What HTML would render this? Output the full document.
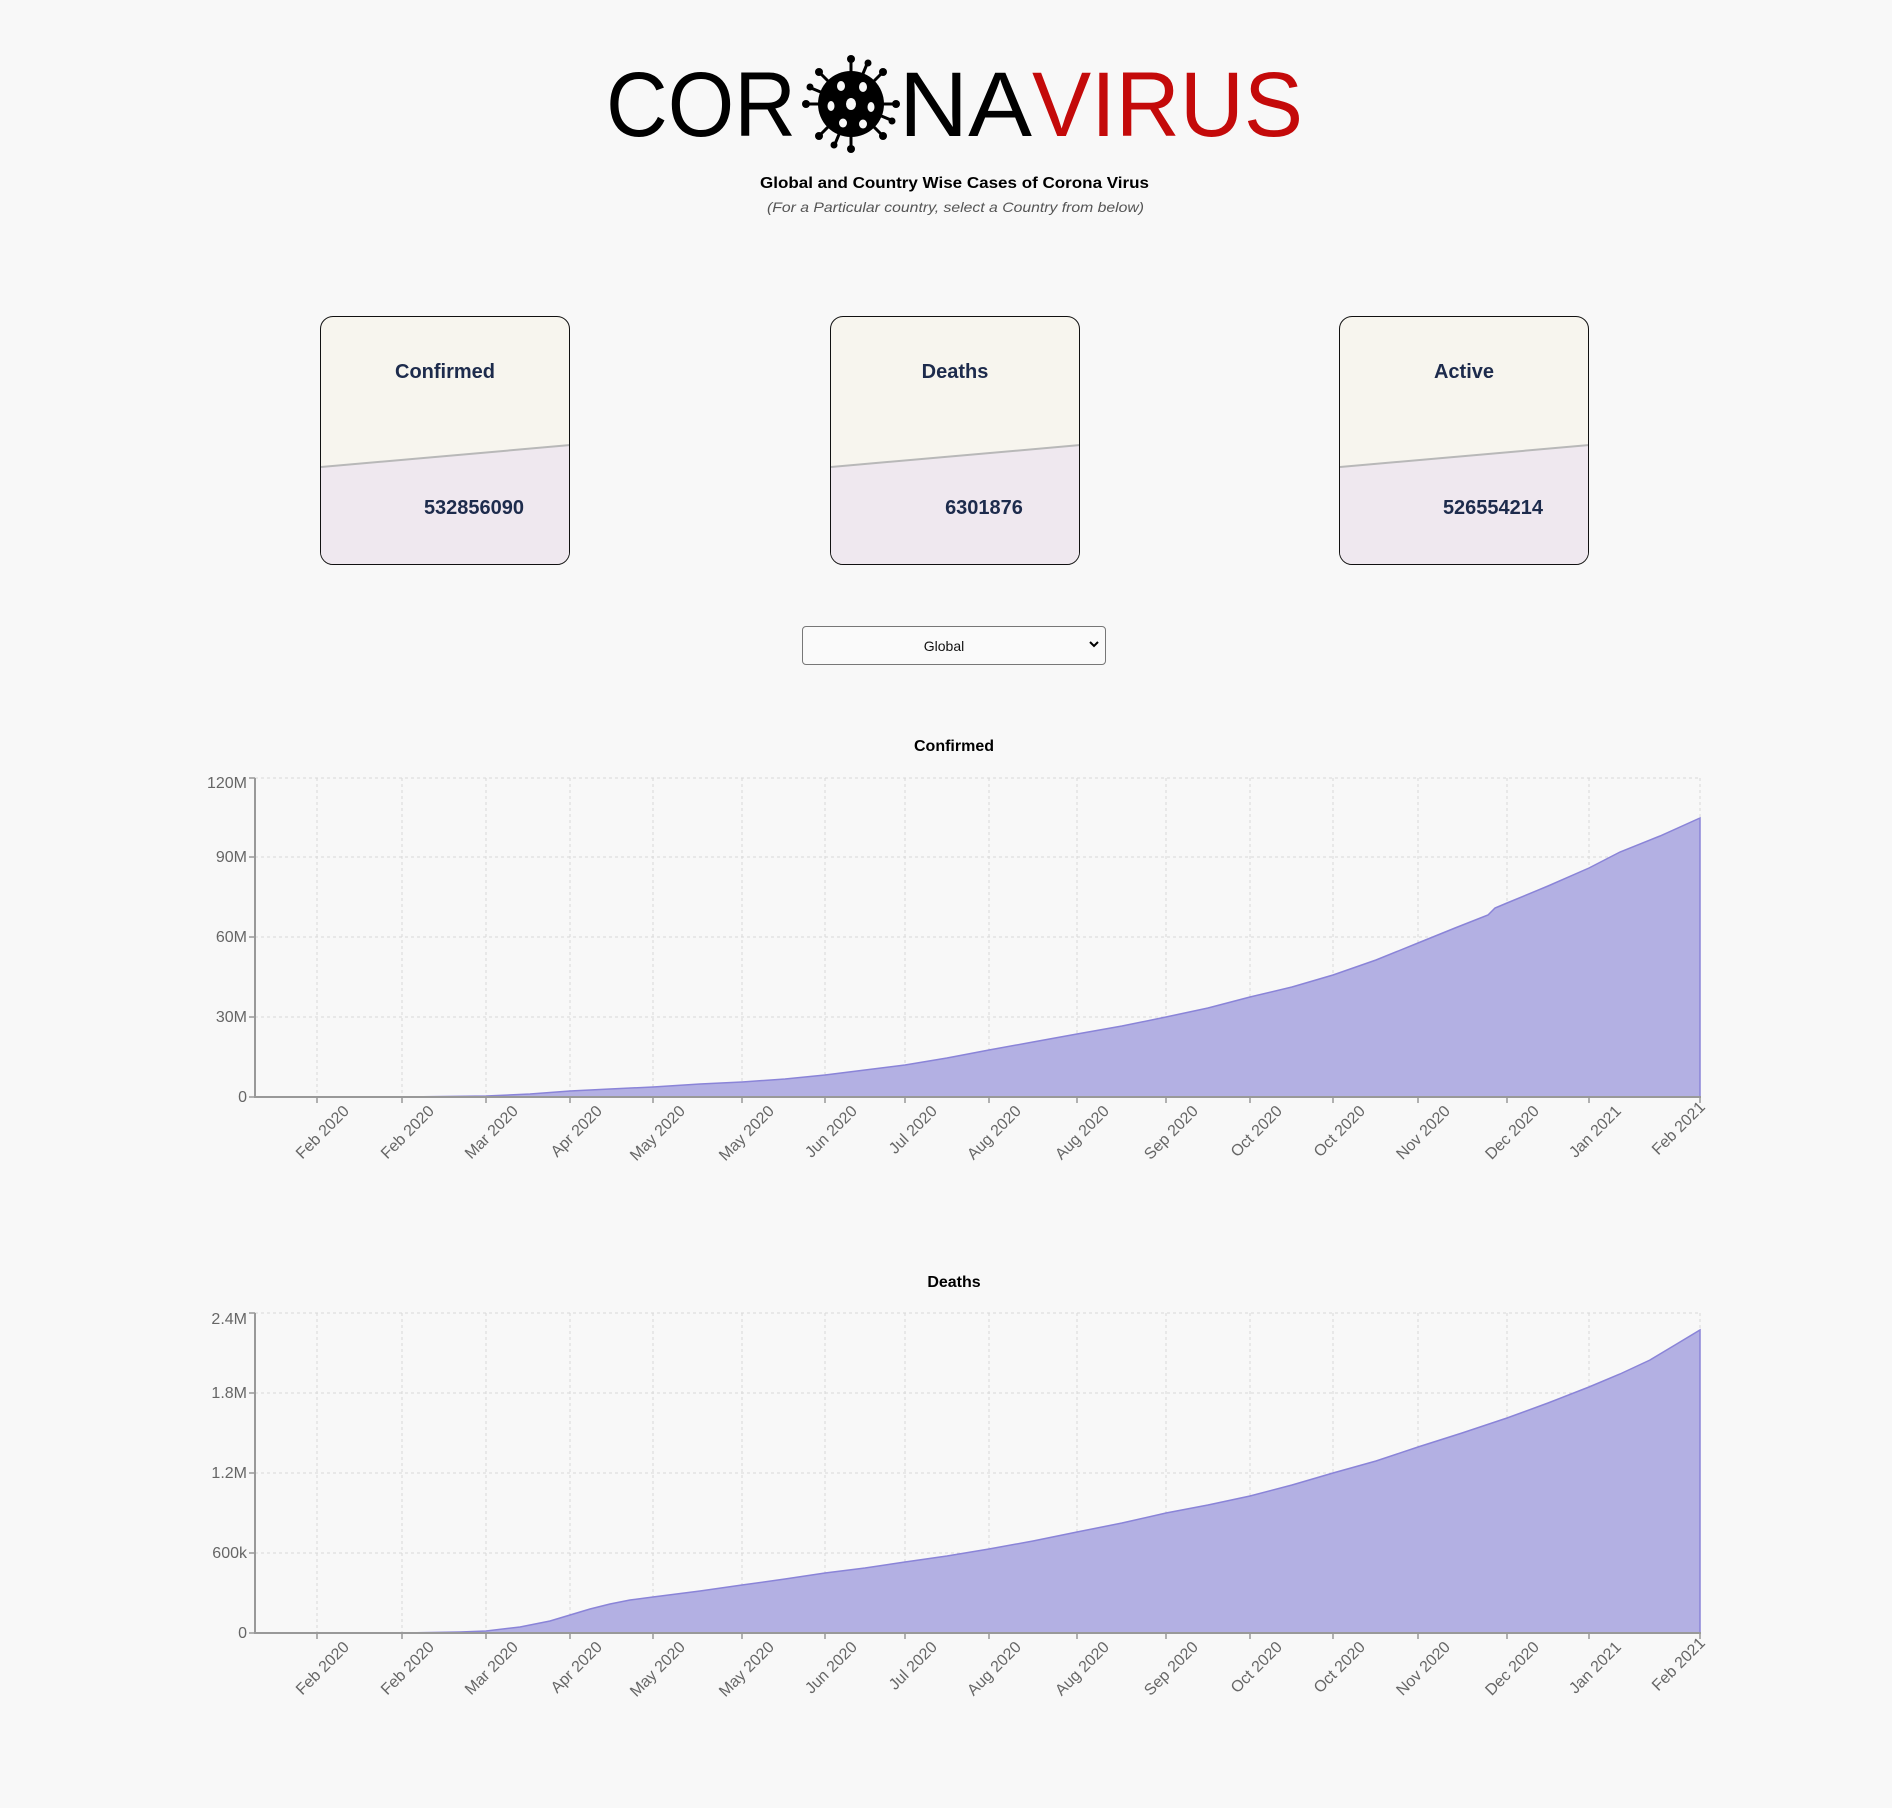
<!DOCTYPE html>
<html><head><meta charset="utf-8"><style>
html,body{margin:0;padding:0;background:#f8f8f8;}
body{width:1892px;height:1808px;position:relative;overflow:hidden;font-family:"Liberation Sans",sans-serif;}
.abs{position:absolute;}
.card{position:absolute;top:316px;width:248px;height:247px;border:1px solid #111;border-radius:13px;overflow:hidden;background:#f7f5ee;}
.card svg{position:absolute;left:0;top:0;}
.card .t{position:absolute;left:0;right:0;top:44px;text-align:center;font-weight:bold;font-size:20px;color:#1d2b4c;}
.card .n{position:absolute;left:0;right:0;top:180px;text-align:center;font-weight:bold;font-size:20px;color:#1d2b4c;padding-left:58px;}
.sel{position:absolute;left:802px;top:626px;width:304px;height:39px;border:1px solid #777;border-radius:4px;background:#fafafa;box-sizing:border-box;}
.sel span{position:absolute;left:0;right:20px;top:11px;text-align:center;font-size:14px;color:#111;}
</style></head><body>

<svg class="abs" style="left:0;top:0" width="1892" height="240">
<text x="606" y="136" font-size="92" textLength="190" lengthAdjust="spacingAndGlyphs" fill="#000" font-family="Liberation Sans,sans-serif">COR</text>
<text x="899" y="136" font-size="92" textLength="133" lengthAdjust="spacingAndGlyphs" fill="#000" font-family="Liberation Sans,sans-serif">NA</text>
<text x="1032" y="136" font-size="92" textLength="271" lengthAdjust="spacingAndGlyphs" fill="#c40a0a" font-family="Liberation Sans,sans-serif">VIRUS</text>
<g transform="translate(851,104)">
<g stroke="#000" stroke-width="3">
<line x1="0" y1="-30" x2="0" y2="-44"/><line x1="0" y1="30" x2="0" y2="44"/>
<line x1="-30" y1="0" x2="-44" y2="0"/><line x1="30" y1="0" x2="44" y2="0"/>
<line x1="21" y1="-21" x2="31" y2="-31"/><line x1="-21" y1="-21" x2="-31" y2="-31"/>
<line x1="21" y1="21" x2="31" y2="31"/><line x1="-21" y1="21" x2="-31" y2="31"/>
<line x1="11" y1="-28" x2="16" y2="-40"/><line x1="-11" y1="28" x2="-16" y2="40"/>
<line x1="28" y1="11" x2="40" y2="16"/><line x1="-28" y1="-11" x2="-40" y2="-16"/>
</g>
<g fill="#000">
<circle cx="0" cy="-45" r="4"/><circle cx="0" cy="45" r="4"/><circle cx="-45" cy="0" r="4"/><circle cx="45" cy="0" r="4"/>
<circle cx="32" cy="-32" r="4"/><circle cx="-32" cy="-32" r="4"/><circle cx="32" cy="32" r="4"/><circle cx="-32" cy="32" r="4"/>
<circle cx="17" cy="-41" r="3.5"/><circle cx="-17" cy="41" r="3.5"/><circle cx="41" cy="17" r="3.5"/><circle cx="-41" cy="-17" r="3.5"/>
<circle r="33"/>
</g>
<g fill="#f8f8f8">
<ellipse cx="0" cy="0" rx="5" ry="6"/><ellipse cx="-10" cy="-18" rx="4" ry="5"/><ellipse cx="12" cy="-17" rx="4" ry="5"/>
<ellipse cx="-20" cy="2" rx="3.5" ry="5"/><ellipse cx="20" cy="3" rx="3.5" ry="5"/><ellipse cx="-8" cy="19" rx="4" ry="4.5"/>
<ellipse cx="12" cy="20" rx="4" ry="4.5"/>
</g>
</g>
<text x="760" y="188" font-size="16" font-weight="bold" textLength="389" lengthAdjust="spacingAndGlyphs" fill="#000">Global and Country Wise Cases of Corona Virus</text>
<text x="767" y="212" font-size="14" font-style="italic" textLength="377" lengthAdjust="spacingAndGlyphs" fill="#555">(For a Particular country, select a Country from below)</text>
</svg>

<div class="card" style="left:320px"><svg width="250" height="250"><polygon points="0,150 250,128 250,250 0,250" fill="#efe8ef"/><line x1="0" y1="150" x2="250" y2="128" stroke="#b8b8b8" stroke-width="2"/></svg><div class="t">Confirmed</div><div class="n">532856090</div></div>
<div class="card" style="left:830px"><svg width="250" height="250"><polygon points="0,150 250,128 250,250 0,250" fill="#efe8ef"/><line x1="0" y1="150" x2="250" y2="128" stroke="#b8b8b8" stroke-width="2"/></svg><div class="t">Deaths</div><div class="n">6301876</div></div>
<div class="card" style="left:1339px"><svg width="250" height="250"><polygon points="0,150 250,128 250,250 0,250" fill="#efe8ef"/><line x1="0" y1="150" x2="250" y2="128" stroke="#b8b8b8" stroke-width="2"/></svg><div class="t">Active</div><div class="n">526554214</div></div>

<div class="sel"><span>Global</span><svg class="abs" style="right:6px;top:14px" width="10" height="8"><path d="M1 1 L5 5 L9 1" stroke="#000" stroke-width="2" fill="none"/></svg></div>

<svg class="abs" style="left:0;top:0" width="1892" height="1808" font-family="Liberation Sans,sans-serif">
<!-- Chart 1 -->
<text x="954" y="751" font-size="16" font-weight="bold" text-anchor="middle" fill="#000">Confirmed</text>
<g stroke="#d8d8d8" stroke-width="1" stroke-dasharray="3,3">
<line x1="255" y1="778" x2="1700" y2="778"/><line x1="255" y1="857" x2="1700" y2="857"/><line x1="255" y1="937" x2="1700" y2="937"/><line x1="255" y1="1017" x2="1700" y2="1017"/>
<line x1="317" y1="778" x2="317" y2="1097"/><line x1="402" y1="778" x2="402" y2="1097"/><line x1="486" y1="778" x2="486" y2="1097"/><line x1="570" y1="778" x2="570" y2="1097"/><line x1="653" y1="778" x2="653" y2="1097"/><line x1="742" y1="778" x2="742" y2="1097"/><line x1="825" y1="778" x2="825" y2="1097"/><line x1="905" y1="778" x2="905" y2="1097"/><line x1="989" y1="778" x2="989" y2="1097"/><line x1="1077" y1="778" x2="1077" y2="1097"/><line x1="1166" y1="778" x2="1166" y2="1097"/><line x1="1250" y1="778" x2="1250" y2="1097"/><line x1="1333" y1="778" x2="1333" y2="1097"/><line x1="1418" y1="778" x2="1418" y2="1097"/><line x1="1507" y1="778" x2="1507" y2="1097"/><line x1="1589" y1="778" x2="1589" y2="1097"/><line x1="1700" y1="778" x2="1700" y2="1097"/>
</g>
<polygon fill="#b3b0e3" stroke="#8a84d8" stroke-width="1.5" points="255,1097 402,1097 486,1096 530,1094 570,1091 610,1089 653,1087 700,1084 742,1082 785,1079 825,1075 865,1070 905,1065 947,1058 989,1050 1033,1042 1077,1034 1122,1026 1166,1017 1208,1008 1250,997 1292,987 1333,975 1376,960 1418,943 1455,928 1488,915 1495,908 1507,903 1548,886 1589,868 1620,852 1660,836 1700,818 1700,1097"/>
<g stroke="#999" stroke-width="2"><line x1="255" y1="778" x2="255" y2="1098"/><line x1="255" y1="1097" x2="1701" y2="1097"/></g>
<g stroke="#999" stroke-width="1.5"><line x1="249" y1="778" x2="255" y2="778"/><line x1="249" y1="857" x2="255" y2="857"/><line x1="249" y1="937" x2="255" y2="937"/><line x1="249" y1="1017" x2="255" y2="1017"/><line x1="249" y1="1097" x2="255" y2="1097"/>
<line x1="317" y1="1097" x2="317" y2="1103"/><line x1="402" y1="1097" x2="402" y2="1103"/><line x1="486" y1="1097" x2="486" y2="1103"/><line x1="570" y1="1097" x2="570" y2="1103"/><line x1="653" y1="1097" x2="653" y2="1103"/><line x1="742" y1="1097" x2="742" y2="1103"/><line x1="825" y1="1097" x2="825" y2="1103"/><line x1="905" y1="1097" x2="905" y2="1103"/><line x1="989" y1="1097" x2="989" y2="1103"/><line x1="1077" y1="1097" x2="1077" y2="1103"/><line x1="1166" y1="1097" x2="1166" y2="1103"/><line x1="1250" y1="1097" x2="1250" y2="1103"/><line x1="1333" y1="1097" x2="1333" y2="1103"/><line x1="1418" y1="1097" x2="1418" y2="1103"/><line x1="1507" y1="1097" x2="1507" y2="1103"/><line x1="1589" y1="1097" x2="1589" y2="1103"/><line x1="1700" y1="1097" x2="1700" y2="1103"/></g>
<g font-size="16" fill="#666" text-anchor="end">
<text x="247" y="788">120M</text><text x="247" y="862">90M</text><text x="247" y="942">60M</text><text x="247" y="1022">30M</text><text x="247" y="1102">0</text>
</g>
<g font-size="16" fill="#666" text-anchor="end">
<text transform="translate(350,1112) rotate(-45)">Feb 2020</text>
<text transform="translate(435,1112) rotate(-45)">Feb 2020</text>
<text transform="translate(519,1112) rotate(-45)">Mar 2020</text>
<text transform="translate(603,1112) rotate(-45)">Apr 2020</text>
<text transform="translate(686,1112) rotate(-45)">May 2020</text>
<text transform="translate(775,1112) rotate(-45)">May 2020</text>
<text transform="translate(858,1112) rotate(-45)">Jun 2020</text>
<text transform="translate(938,1112) rotate(-45)">Jul 2020</text>
<text transform="translate(1022,1112) rotate(-45)">Aug 2020</text>
<text transform="translate(1110,1112) rotate(-45)">Aug 2020</text>
<text transform="translate(1199,1112) rotate(-45)">Sep 2020</text>
<text transform="translate(1283,1112) rotate(-45)">Oct 2020</text>
<text transform="translate(1366,1112) rotate(-45)">Oct 2020</text>
<text transform="translate(1451,1112) rotate(-45)">Nov 2020</text>
<text transform="translate(1540,1112) rotate(-45)">Dec 2020</text>
<text transform="translate(1622,1112) rotate(-45)">Jan 2021</text>
<text transform="translate(1706,1108) rotate(-45)">Feb 2021</text>
</g>

<!-- Chart 2 -->
<text x="954" y="1287" font-size="16" font-weight="bold" text-anchor="middle" fill="#000">Deaths</text>
<g stroke="#d8d8d8" stroke-width="1" stroke-dasharray="3,3">
<line x1="255" y1="1313" x2="1700" y2="1313"/><line x1="255" y1="1393" x2="1700" y2="1393"/><line x1="255" y1="1473" x2="1700" y2="1473"/><line x1="255" y1="1553" x2="1700" y2="1553"/>
<line x1="317" y1="1313" x2="317" y2="1633"/><line x1="402" y1="1313" x2="402" y2="1633"/><line x1="486" y1="1313" x2="486" y2="1633"/><line x1="570" y1="1313" x2="570" y2="1633"/><line x1="653" y1="1313" x2="653" y2="1633"/><line x1="742" y1="1313" x2="742" y2="1633"/><line x1="825" y1="1313" x2="825" y2="1633"/><line x1="905" y1="1313" x2="905" y2="1633"/><line x1="989" y1="1313" x2="989" y2="1633"/><line x1="1077" y1="1313" x2="1077" y2="1633"/><line x1="1166" y1="1313" x2="1166" y2="1633"/><line x1="1250" y1="1313" x2="1250" y2="1633"/><line x1="1333" y1="1313" x2="1333" y2="1633"/><line x1="1418" y1="1313" x2="1418" y2="1633"/><line x1="1507" y1="1313" x2="1507" y2="1633"/><line x1="1589" y1="1313" x2="1589" y2="1633"/><line x1="1700" y1="1313" x2="1700" y2="1633"/>
</g>
<polygon fill="#b3b0e3" stroke="#8a84d8" stroke-width="1.5" points="255,1633 402,1633 460,1632 486,1631 520,1627 550,1621 570,1615 590,1609 610,1604 630,1600 653,1597 700,1591 742,1585 785,1579 825,1573 865,1568 905,1562 947,1556 989,1549 1033,1541 1077,1532 1122,1523 1166,1513 1208,1505 1250,1496 1292,1485 1333,1473 1376,1461 1418,1447 1462,1433 1507,1418 1548,1403 1589,1387 1620,1374 1650,1360 1675,1345 1700,1330 1700,1633"/>
<g stroke="#999" stroke-width="2"><line x1="255" y1="1313" x2="255" y2="1634"/><line x1="255" y1="1633" x2="1701" y2="1633"/></g>
<g stroke="#999" stroke-width="1.5"><line x1="249" y1="1313" x2="255" y2="1313"/><line x1="249" y1="1393" x2="255" y2="1393"/><line x1="249" y1="1473" x2="255" y2="1473"/><line x1="249" y1="1553" x2="255" y2="1553"/><line x1="249" y1="1633" x2="255" y2="1633"/>
<line x1="317" y1="1633" x2="317" y2="1639"/><line x1="402" y1="1633" x2="402" y2="1639"/><line x1="486" y1="1633" x2="486" y2="1639"/><line x1="570" y1="1633" x2="570" y2="1639"/><line x1="653" y1="1633" x2="653" y2="1639"/><line x1="742" y1="1633" x2="742" y2="1639"/><line x1="825" y1="1633" x2="825" y2="1639"/><line x1="905" y1="1633" x2="905" y2="1639"/><line x1="989" y1="1633" x2="989" y2="1639"/><line x1="1077" y1="1633" x2="1077" y2="1639"/><line x1="1166" y1="1633" x2="1166" y2="1639"/><line x1="1250" y1="1633" x2="1250" y2="1639"/><line x1="1333" y1="1633" x2="1333" y2="1639"/><line x1="1418" y1="1633" x2="1418" y2="1639"/><line x1="1507" y1="1633" x2="1507" y2="1639"/><line x1="1589" y1="1633" x2="1589" y2="1639"/><line x1="1700" y1="1633" x2="1700" y2="1639"/></g>
<g font-size="16" fill="#666" text-anchor="end">
<text x="247" y="1324">2.4M</text><text x="247" y="1398">1.8M</text><text x="247" y="1478">1.2M</text><text x="247" y="1558">600k</text><text x="247" y="1638">0</text>
</g>
<g font-size="16" fill="#666" text-anchor="end">
<text transform="translate(350,1648) rotate(-45)">Feb 2020</text>
<text transform="translate(435,1648) rotate(-45)">Feb 2020</text>
<text transform="translate(519,1648) rotate(-45)">Mar 2020</text>
<text transform="translate(603,1648) rotate(-45)">Apr 2020</text>
<text transform="translate(686,1648) rotate(-45)">May 2020</text>
<text transform="translate(775,1648) rotate(-45)">May 2020</text>
<text transform="translate(858,1648) rotate(-45)">Jun 2020</text>
<text transform="translate(938,1648) rotate(-45)">Jul 2020</text>
<text transform="translate(1022,1648) rotate(-45)">Aug 2020</text>
<text transform="translate(1110,1648) rotate(-45)">Aug 2020</text>
<text transform="translate(1199,1648) rotate(-45)">Sep 2020</text>
<text transform="translate(1283,1648) rotate(-45)">Oct 2020</text>
<text transform="translate(1366,1648) rotate(-45)">Oct 2020</text>
<text transform="translate(1451,1648) rotate(-45)">Nov 2020</text>
<text transform="translate(1540,1648) rotate(-45)">Dec 2020</text>
<text transform="translate(1622,1648) rotate(-45)">Jan 2021</text>
<text transform="translate(1706,1644) rotate(-45)">Feb 2021</text>
</g>
</svg>
</body></html>
